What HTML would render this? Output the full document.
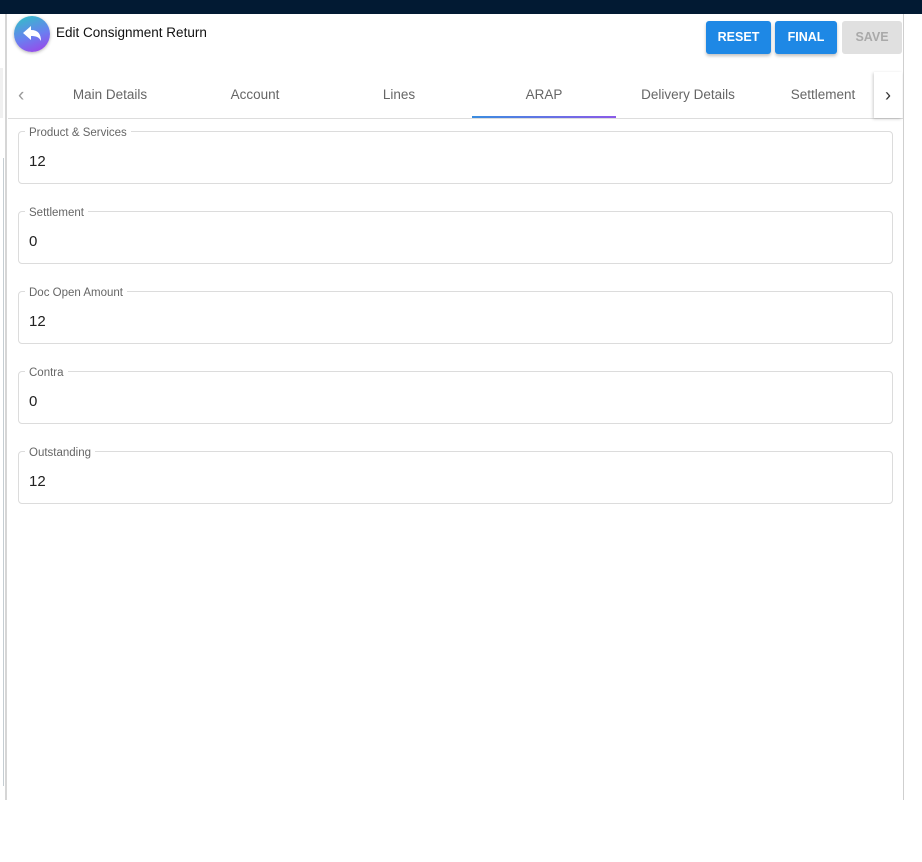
<!DOCTYPE html>
<html><head><style>
body{margin:0;width:922px;height:862px;background:#fff;font-family:"Liberation Sans",sans-serif;position:relative;overflow:hidden}
.top{position:absolute;left:0;top:0;width:922px;height:14px;background:#021a33}
.lbar{position:absolute;left:5px;top:14px;width:2px;height:786px;background:#d6d6d6}
.rbar{position:absolute;left:903px;top:14px;width:1px;height:786px;background:#cfcfcf}
.ic{position:absolute;left:14px;top:16px;width:36px;height:36px;border-radius:50%;background:linear-gradient(160deg,#2ec4c4,#6a7ff0 55%,#a23ee8);box-shadow:0 1px 3px rgba(0,0,0,.3)}
.title{position:absolute;left:56px;top:25px;font-size:13.5px;color:#111}
.btn{position:absolute;top:21px;height:33px;border-radius:3px;color:#fff;font-weight:bold;font-size:12.5px;text-align:center;line-height:33px;background:#1e88e5;box-shadow:0 2px 3px rgba(0,0,0,.25)}
.tabs{position:absolute;left:8px;top:70px;width:895px;height:48px;border-bottom:1px solid #ddd}
.tab{position:absolute;top:17px;width:144px;text-align:center;font-size:13.5px;color:#666}
.ind{position:absolute;left:472px;top:116px;width:144px;height:2px;background:linear-gradient(90deg,#3a8de0,#8a5ae8)}
.f{position:absolute;left:18px;width:873px;height:51px;border:1px solid #dcdcdc;border-radius:4px}
.f .l{position:absolute;left:6px;top:-5px;background:#fff;padding:0 4px;font-size:11.5px;color:#666}
.f .v{position:absolute;left:10px;top:21px;font-size:15px;color:#222}
</style></head><body>
<div class="top"></div>
<div class="lbar"></div><div class="rbar"></div>
<div style="position:absolute;left:0;top:68px;width:3px;height:50px;background:#f0f0f0"></div>
<div style="position:absolute;left:0;top:158px;width:3px;height:628px;border-right:1px solid #c5cdd2"></div>
<div class="ic"><svg width="36" height="36" viewBox="0 0 36 36"><path d="M9 17 L17 10 L17 14 C24 14 27 18 27 25 C25 21 22 20 17 20 L17 24 Z" fill="#fff"/></svg></div>
<div class="title">Edit Consignment Return</div>
<div class="btn" style="left:706px;width:65px">RESET</div>
<div class="btn" style="left:775px;width:62px">FINAL</div>
<div class="btn" style="left:842px;width:60px;background:#e0e0e0;color:#a9a9a9;box-shadow:none">SAVE</div>
<div class="tabs">
<div style="position:absolute;left:10px;top:15px;font-size:19px;color:#999">‹</div>
<div class="tab" style="left:30px">Main Details</div>
<div class="tab" style="left:175px">Account</div>
<div class="tab" style="left:319px">Lines</div>
<div class="tab" style="left:464px">ARAP</div>
<div class="tab" style="left:608px">Delivery Details</div>
<div class="tab" style="left:760px;width:110px;overflow:hidden;white-space:nowrap">Settlement</div>
<div style="position:absolute;left:866px;top:2px;width:28px;height:46px;background:#fff;box-shadow:-1px 1px 3px rgba(0,0,0,.2);text-align:center;line-height:46px;font-size:18px;color:#333">›</div>
</div>
<div class="ind"></div>
<div class="f" style="top:131px"><span class="l">Product &amp; Services</span><span class="v">12</span></div>
<div class="f" style="top:211px"><span class="l">Settlement</span><span class="v">0</span></div>
<div class="f" style="top:291px"><span class="l">Doc Open Amount</span><span class="v">12</span></div>
<div class="f" style="top:371px"><span class="l">Contra</span><span class="v">0</span></div>
<div class="f" style="top:451px"><span class="l">Outstanding</span><span class="v">12</span></div>
</body></html>
